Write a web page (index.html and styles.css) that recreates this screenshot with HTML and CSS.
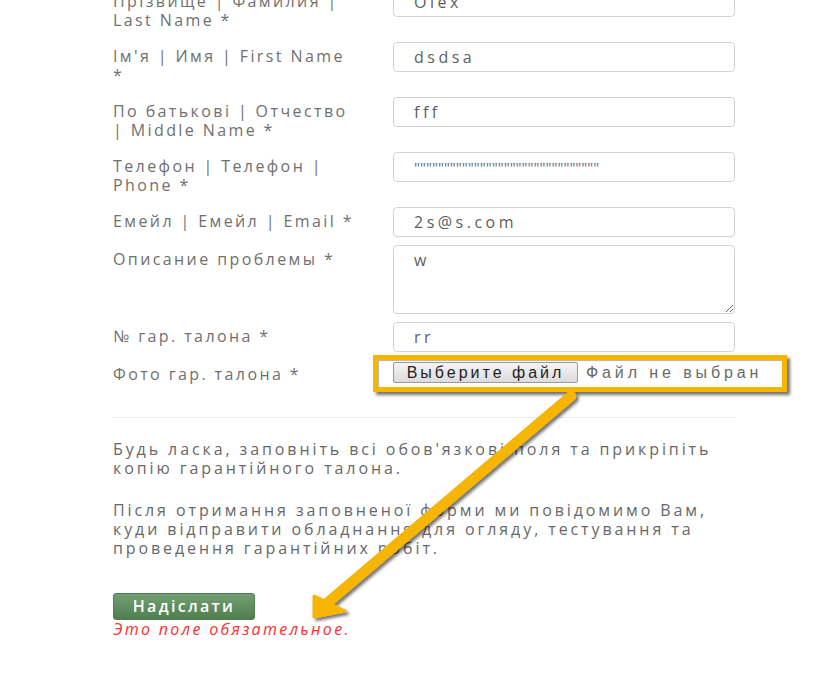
FILE: index.html
```html
<!DOCTYPE html>
<html lang="uk">
<head>
<meta charset="utf-8">
<title>Форма</title>
<link rel="stylesheet" href="styles.css">
</head>
<body>
<div class="page">
  <form class="form">
    <div class="row">
      <label class="lbl">Прізвище | Фамилия | Last Name *</label>
      <input class="field" type="text" value="Olex">
    </div>
    <div class="row">
      <label class="lbl">Ім'я | Имя | First Name *</label>
      <input class="field" type="text" value="dsdsa">
    </div>
    <div class="row">
      <label class="lbl">По батькові | Отчество | Middle Name *</label>
      <input class="field" type="text" value="fff">
    </div>
    <div class="row">
      <label class="lbl">Телефон | Телефон | Phone *</label>
      <input class="field field-dots" type="text" value="&quot;&quot;&quot;&quot;&quot;&quot;&quot;&quot;&quot;&quot;&quot;&quot;&quot;&quot;&quot;&quot;&quot;&quot;&quot;&quot;&quot;&quot;&quot;&quot;&quot;&quot;&quot;&quot;&quot;&quot;&quot;">
    </div>
    <div class="row">
      <label class="lbl">Емейл | Емейл | Email *</label>
      <input class="field" type="text" value="2s@s.com">
    </div>
    <div class="row">
      <label class="lbl">Описание проблемы *</label>
      <textarea class="field area">w</textarea>
    </div>
    <div class="row">
      <label class="lbl">№ гар. талона *</label>
      <input class="field" type="text" value="rr">
    </div>
    <div class="row">
      <label class="lbl">Фото гар. талона *</label>
      <div class="file">
        <span class="file-btn">Выберите файл</span>
        <span class="file-name">Файл не выбран</span>
        <span class="highlight"></span>
      </div>
    </div>
    <hr class="sep">
    <p class="note">Будь ласка, заповніть всі обов'язкові поля та прикріпіть<br>копію гарантійного талона.</p>
    <p class="note">Після отримання заповненої форми ми повідомимо Вам,<br>куди відправити обладнання для огляду, тестування та<br>проведення гарантійних робіт.</p>
    <button class="submit" type="button">Надіслати</button>
    <div class="error">Это поле обязательное.</div>
  </form>
  <svg class="arrow" width="831" height="674" viewBox="0 0 831 674" xmlns="http://www.w3.org/2000/svg">
    <defs>
      <filter id="sh" x="-20%" y="-20%" width="140%" height="140%">
        <feDropShadow dx="2.5" dy="2.5" stdDeviation="1.6" flood-color="#000" flood-opacity="0.55"/>
      </filter>
    </defs>
    <g filter="url(#sh)" fill="#f6b500" stroke="#f6b500">
      <line x1="571" y1="396" x2="326" y2="604" stroke-width="10.5" stroke-linecap="round"/>
      <polygon points="314,617 314,596 345,611" stroke-width="3" stroke-linejoin="round"/>
    </g>
  </svg>
</div>
</body>
</html>
```
FILE: styles.css
```css
html, body {
  margin: 0;
  padding: 0;
  background: #ffffff;
}

body {
  font-family: "Open Sans", "Liberation Sans", sans-serif;
  font-size: 16px;
  letter-spacing: 2.4px;
  color: #6a6a6a;
  overflow: hidden;
}

.page {
  position: relative;
  width: 831px;
  height: 674px;
  overflow: hidden;
}

.form {
  margin: -13px 0 0 113px;
  width: 622px;
}

.row {
  display: grid;
  grid-template-columns: 280px 342px;
  margin-bottom: 8px;
  align-items: start;
}

.lbl {
  display: block;
  padding: 5px 32px 0 0;
  margin-bottom: 4px;
  line-height: 19px;
  color: #707070;
}

.field {
  box-sizing: border-box;
  width: 342px;
  height: 30px;
  margin: 0;
  padding: 0 20px;
  border: 1px solid #d2d2d2;
  border-radius: 4px;
  background: #fff;
  font-family: "Open Sans", "Liberation Sans", sans-serif;
  font-size: 16px;
  letter-spacing: 3.5px;
  color: #5e5e5e;
  outline: none;
}

.field-dots {
  letter-spacing: 0;
  color: #6b6b92;
  font-size: 15px;
}

.area {
  height: 69px;
  padding: 5px 20px;
  line-height: 19px;
  display: block;
}

.file {
  position: relative;
  display: flex;
  align-items: center;
  margin-top: 2px;
  height: 21px;
  white-space: nowrap;
}

.file-btn {
  flex: 0 0 auto;
  box-sizing: border-box;
  height: 21px;
  width: 185px;
  padding: 0 4px;
  border: 1px solid #9a9a9a;
  border-radius: 2px;
  background: linear-gradient(#f4f4f4, #dcdcdc);
  font-family: "Liberation Sans", Arial, sans-serif;
  font-size: 16px;
  letter-spacing: 3px;
  line-height: 19px;
  color: #1e1e1e;
  text-align: center;
}

.file-name {
  flex: 0 0 auto;
  margin-left: 8px;
  font-family: "Liberation Sans", Arial, sans-serif;
  font-size: 16px;
  letter-spacing: 3.9px;
  color: #6a6a6a;
}

.highlight {
  position: absolute;
  left: -20px;
  top: -7px;
  width: 414px;
  height: 37px;
  box-sizing: border-box;
  border: 5px solid #f6b500;
  box-shadow: 3px 3px 3px rgba(0, 0, 0, 0.55), inset 1px 1px 1px rgba(0, 0, 0, 0.3);
}

.sep {
  margin: 29px 0 0 0;
  border: 0;
  border-top: 1px solid #eeeeee;
  height: 0;
}

.note {
  margin: 22px 0 23px 0;
  width: 700px;
  line-height: 19px;
  letter-spacing: 2.9px;
  color: #686868;
}

.note + .note {
  margin-top: 0;
}

.submit {
  display: block;
  box-sizing: border-box;
  width: 142px;
  height: 27px;
  margin: 35px 0 0 0;
  padding: 0;
  border: 1px solid #4c7b4c;
  border-radius: 3px;
  background: linear-gradient(#72a072, #4f7e4f);
  font-family: "Open Sans", "Liberation Sans", sans-serif;
  font-size: 16px;
  font-weight: 600;
  letter-spacing: 2.3px;
  color: #ffffff;
  line-height: 25px;
}

.error {
  line-height: 19px;
  font-style: italic;
  color: #ff2d2d;
  letter-spacing: 2.3px;
}

.arrow {
  position: absolute;
  left: 0;
  top: 0;
  pointer-events: none;
}
```
